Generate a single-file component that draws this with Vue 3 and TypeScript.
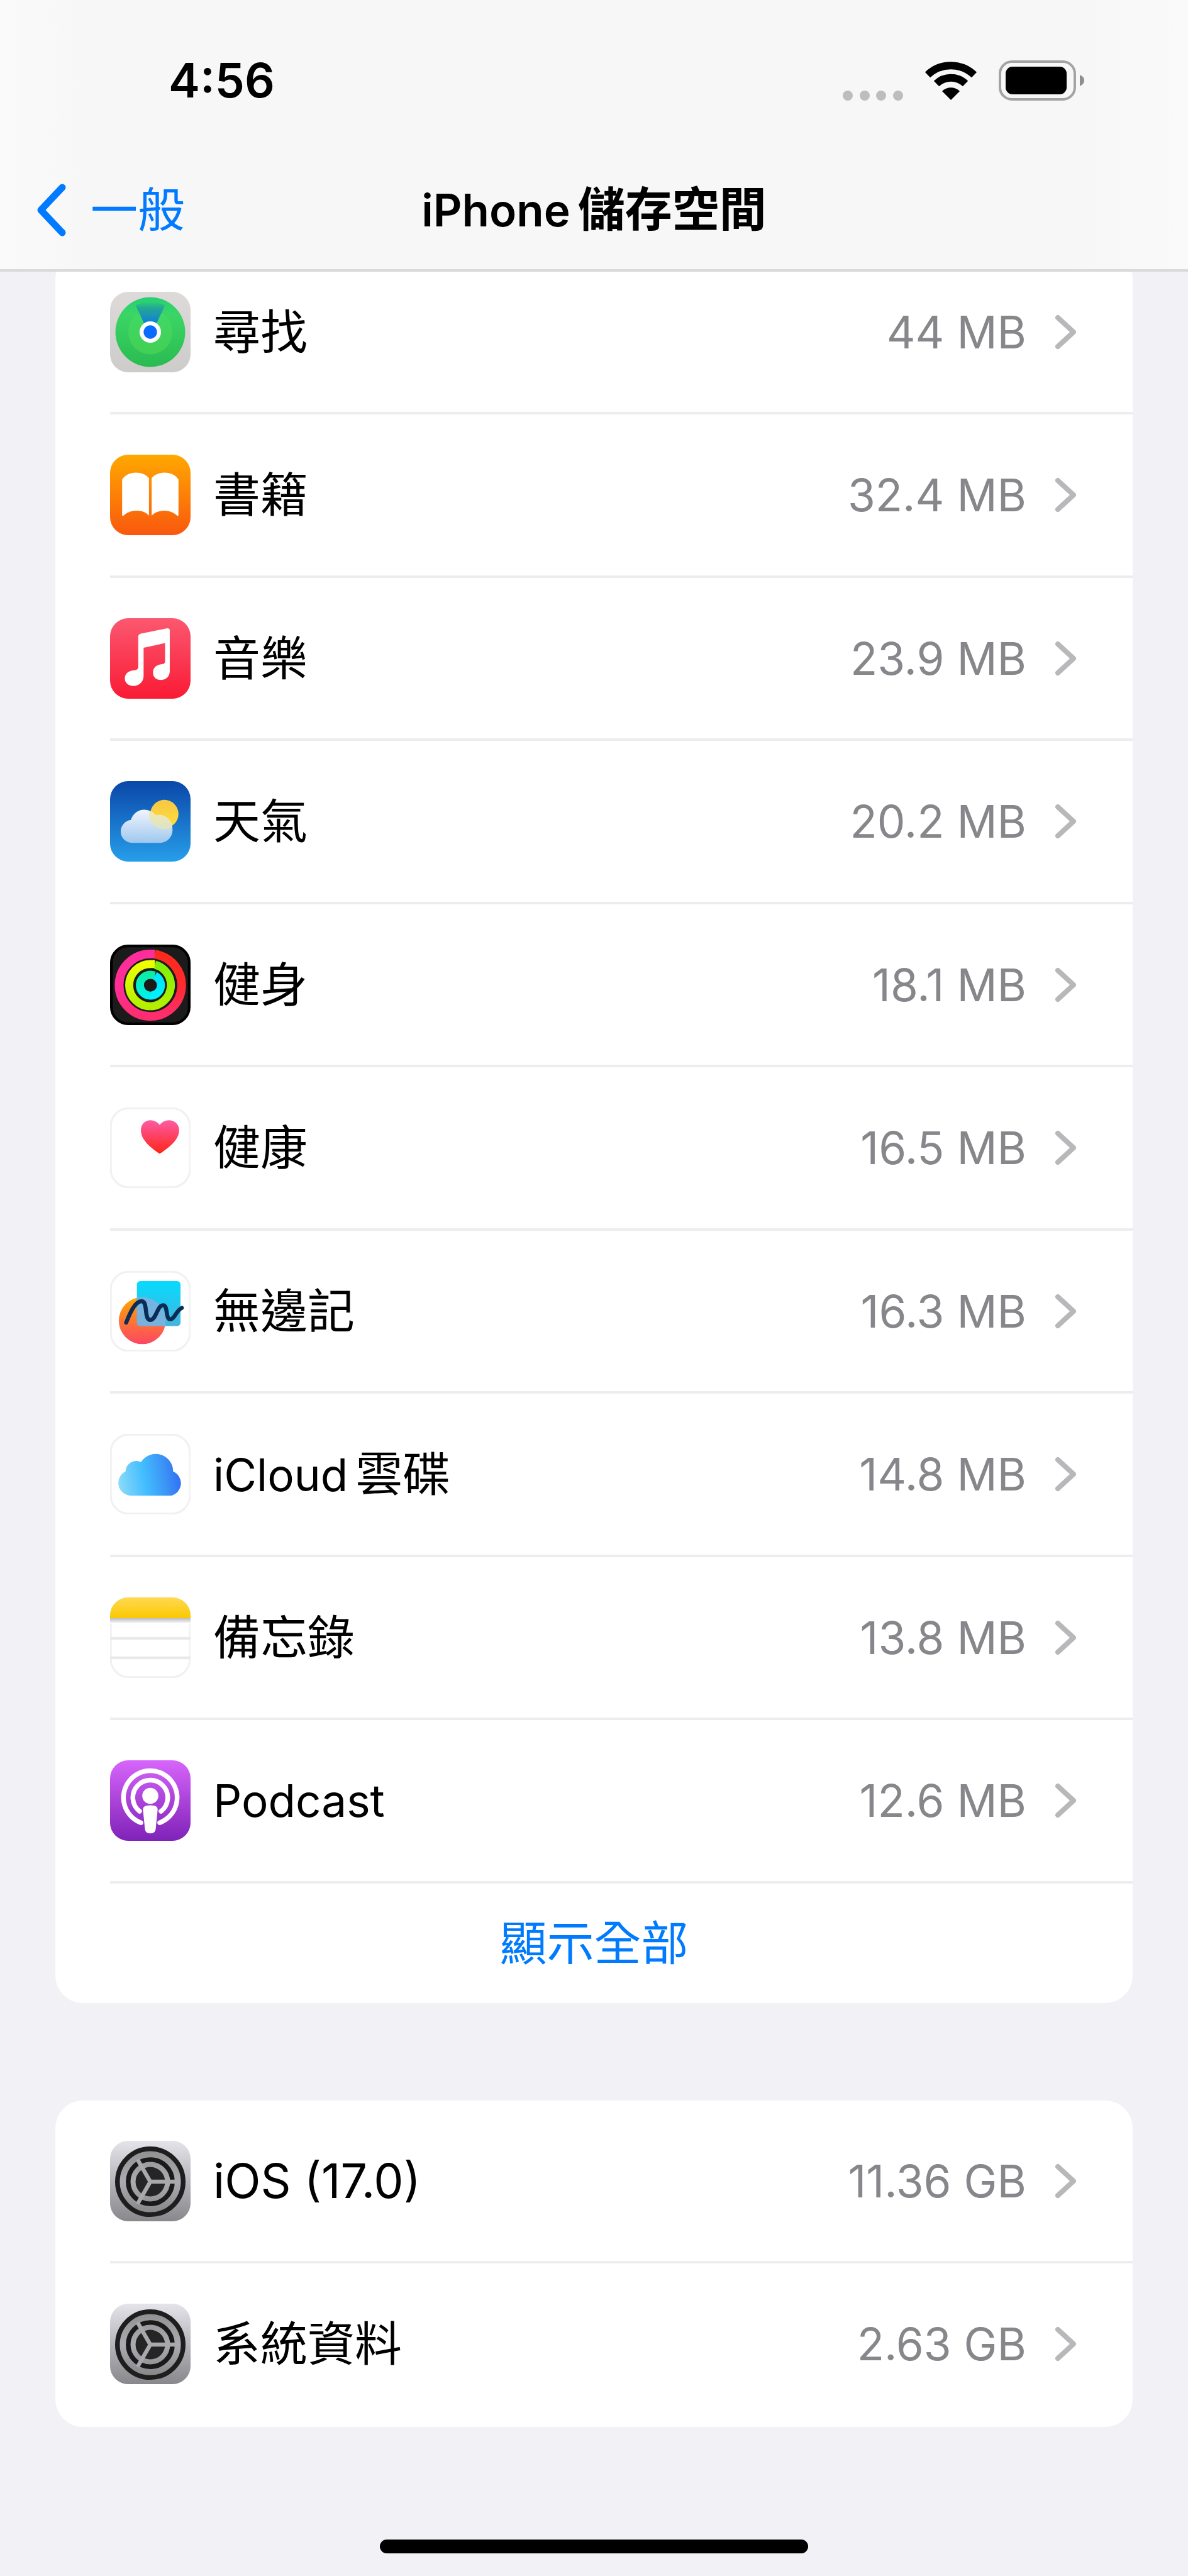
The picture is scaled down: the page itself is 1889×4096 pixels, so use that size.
<script setup lang="ts">
type IconName =
  | 'find' | 'books' | 'music' | 'weather' | 'fitness' | 'health'
  | 'freeform' | 'icloud' | 'notes' | 'podcast' | 'settings'

interface StorageItem {
  icon: IconName
  brand?: string
  name?: string
  size: string
}

const apps: StorageItem[] = [
  { icon: 'find', name: '尋找', size: '44 MB' },
  { icon: 'books', name: '書籍', size: '32.4 MB' },
  { icon: 'music', name: '音樂', size: '23.9 MB' },
  { icon: 'weather', name: '天氣', size: '20.2 MB' },
  { icon: 'fitness', name: '健身', size: '18.1 MB' },
  { icon: 'health', name: '健康', size: '16.5 MB' },
  { icon: 'freeform', name: '無邊記', size: '16.3 MB' },
  { icon: 'icloud', brand: 'iCloud', name: '雲碟', size: '14.8 MB' },
  { icon: 'notes', name: '備忘錄', size: '13.8 MB' },
  { icon: 'podcast', brand: 'Podcast', size: '12.6 MB' },
]

const system: StorageItem[] = [
  { icon: 'settings', name: 'iOS (17.0)', size: '11.36 GB' },
  { icon: 'settings', name: '系統資料', size: '2.63 GB' },
]

const groups = [
  { id: 'apps', items: apps, more: '顯示全部' },
  { id: 'system', items: system, more: '' },
]
</script>

<template>
  <div class="screen">
    <!-- Gradients shared by the app icons -->
    <svg class="defs" aria-hidden="true">
      <defs>
        <linearGradient id="g-find-bg" x1="0" y1="0" x2="0" y2="1"><stop offset="0" stop-color="#dedad9" /><stop offset="1" stop-color="#cdccca" /></linearGradient>
        <linearGradient id="g-find" x1="0" y1="0" x2="0" y2="1"><stop offset="0" stop-color="#27cf74" /><stop offset=".25" stop-color="#3bd565" /><stop offset="1" stop-color="#2abb50" /></linearGradient>
        <linearGradient id="g-find-in" x1="0" y1="0" x2="0" y2="1"><stop offset="0" stop-color="#3fda66" /><stop offset="1" stop-color="#43cf55" /></linearGradient>
        <linearGradient id="g-beam" x1="0" y1="0" x2="0" y2="1"><stop offset="0" stop-color="#27cf74" /><stop offset=".25" stop-color="#24a596" /><stop offset="1" stop-color="#0a74ee" /></linearGradient>
        <linearGradient id="g-books" x1="0" y1="0" x2="0" y2="1"><stop offset="0" stop-color="#ffa800" /><stop offset="1" stop-color="#f9580e" /></linearGradient>
        <linearGradient id="g-music" x1="0" y1="0" x2="0" y2="1"><stop offset="0" stop-color="#fb5870" /><stop offset="1" stop-color="#fa1a34" /></linearGradient>
        <linearGradient id="g-weather" x1="0" y1="0" x2="0" y2="1"><stop offset="0" stop-color="#0a47a8" /><stop offset="1" stop-color="#279eea" /></linearGradient>
        <linearGradient id="g-sun" x1="0" y1="0" x2="0" y2="1"><stop offset="0" stop-color="#f7c744" /><stop offset="1" stop-color="#ffdf3a" /></linearGradient>
        <linearGradient id="g-cloud" gradientUnits="userSpaceOnUse" x1="0" y1="37" x2="0" y2="92"><stop offset="0" stop-color="#fafaff" /><stop offset="1" stop-color="#9fc8ee" /></linearGradient>
        <linearGradient id="g-glow" gradientUnits="userSpaceOnUse" x1="0" y1="45" x2="0" y2="74"><stop offset="0" stop-color="#f3e9b0" /><stop offset="1" stop-color="#d9e2c9" /></linearGradient>
        <linearGradient id="g-r1" gradientUnits="userSpaceOnUse" x1="0" y1="14" x2="0" y2="107"><stop offset="0" stop-color="#ff2a1c" /><stop offset=".5" stop-color="#ff2a2e" /><stop offset="1" stop-color="#ff2d70" /></linearGradient>
        <linearGradient id="g-r2" gradientUnits="userSpaceOnUse" x1="0" y1="14" x2="0" y2="107"><stop offset="0" stop-color="#ff2d9c" /><stop offset=".6" stop-color="#ff2d92" /><stop offset="1" stop-color="#ff2d70" /></linearGradient>
        <linearGradient id="g-r3" gradientUnits="userSpaceOnUse" x1="0" y1="29" x2="0" y2="92"><stop offset="0" stop-color="#7ff00c" /><stop offset="1" stop-color="#b4f000" /></linearGradient>
        <linearGradient id="g-r4" gradientUnits="userSpaceOnUse" x1="0" y1="29" x2="0" y2="92"><stop offset="0" stop-color="#eeff00" /><stop offset="1" stop-color="#b4f000" /></linearGradient>
        <linearGradient id="g-r5" gradientUnits="userSpaceOnUse" x1="0" y1="40" x2="0" y2="80"><stop offset="0" stop-color="#00e4fa" /><stop offset="1" stop-color="#00f2ff" /></linearGradient>
        <linearGradient id="g-r6" gradientUnits="userSpaceOnUse" x1="0" y1="40" x2="0" y2="80"><stop offset="0" stop-color="#0cec9f" /><stop offset="1" stop-color="#00f2f0" /></linearGradient>
        <linearGradient id="g-heart" x1="0" y1="0" x2="0" y2="1"><stop offset="0" stop-color="#fd5ca4" /><stop offset="1" stop-color="#ff2416" /></linearGradient>
        <linearGradient id="g-square" x1="0" y1="0" x2="0" y2="1"><stop offset="0" stop-color="#06dbff" /><stop offset="1" stop-color="#45b4da" /></linearGradient>
        <linearGradient id="g-disc" x1="0" y1="0" x2="0" y2="1"><stop offset="0" stop-color="#ffa800" /><stop offset="1" stop-color="#fd4664" /></linearGradient>
        <linearGradient id="g-icloud" gradientUnits="userSpaceOnUse" x1="11" y1="78" x2="109" y2="62"><stop offset="0" stop-color="#8fdcf8" /><stop offset=".42" stop-color="#42bdff" /><stop offset=".75" stop-color="#3b90f4" /><stop offset="1" stop-color="#2f68f4" /></linearGradient>
        <linearGradient id="g-notes" x1="0" y1="0" x2="0" y2="1"><stop offset="0" stop-color="#ffd952" /><stop offset="1" stop-color="#fbc800" /></linearGradient>
        <linearGradient id="g-shade" x1="0" y1="0" x2="0" y2="1"><stop offset="0" stop-color="#b9b9c2" /><stop offset="1" stop-color="#ffffff" /></linearGradient>
        <linearGradient id="g-podcast" x1="0" y1="0" x2="0" y2="1"><stop offset="0" stop-color="#d765fb" /><stop offset="1" stop-color="#7f22b8" /></linearGradient>
        <linearGradient id="g-settings" x1="0" y1="0" x2="0" y2="1"><stop offset="0" stop-color="#e4e4ea" /><stop offset="1" stop-color="#87878c" /></linearGradient>
        <linearGradient id="g-gear" x1="0" y1="0" x2="0" y2="1"><stop offset="0" stop-color="#8f8f92" /><stop offset=".5" stop-color="#acacb0" /><stop offset="1" stop-color="#858588" /></linearGradient>
        <clipPath id="c-icon"><rect width="120" height="120" rx="27" /></clipPath>
        <clipPath id="c-square"><rect x="40" y="15" width="65" height="67" rx="5" /></clipPath>
        <clipPath id="c-cloud"><path d="M35 92A17 17 0 0 1 31 58A21 21 0 0 1 68 51A20 20 0 0 1 93 71A19 19 0 0 1 76 92Z" /></clipPath>
      </defs>
    </svg>

    <header class="top">
      <div class="status">
        <time class="clock">4:56</time>
        <div class="signals">
          <svg width="96" height="16" viewBox="0 0 96 16" fill="#bdbdbd" role="img" aria-label="行動網路">
            <circle cx="8" cy="8" r="8" /><circle cx="35" cy="8" r="8" /><circle cx="61" cy="8" r="8" /><circle cx="88" cy="8" r="8" />
          </svg>
          <svg width="84" height="64" viewBox="0 0 84 64" role="img" aria-label="Wi-Fi">
            <g fill="none" stroke="#000" stroke-width="12">
              <path d="M5 23A54 54 0 0 1 79 23" />
              <path d="M19 37A33 33 0 0 1 65 37" />
            </g>
            <path d="M42 63L28 49A20 20 0 0 1 56 49Z" />
          </svg>
          <svg width="136" height="64" viewBox="0 0 136 64" role="img" aria-label="電池">
            <rect x="2" y="2" width="119" height="60" rx="19" fill="none" stroke="#a3a3a3" stroke-width="4" />
            <rect x="11" y="10" width="97" height="44" rx="11" />
            <path d="M129 23Q136 26 136 32T129 41Z" fill="#8f8f8f" />
          </svg>
        </div>
      </div>
      <nav class="bar">
        <a class="back" href="#general">
          <svg width="48" height="84" viewBox="0 0 48 84" fill="none" stroke="#007aff" stroke-width="11" stroke-linecap="round" stroke-linejoin="round" aria-hidden="true"><path d="M41 6L7 42L41 78" /></svg>
          <span>一般</span>
        </a>
        <h1><span class="brand">iPhone</span><span>儲存空間</span></h1>
      </nav>
    </header>

    <main class="content">
      <section v-for="group in groups" :key="group.id" class="card">
        <ul>
          <li v-for="item in group.items" :key="item.size">
            <a class="row" :href="'#' + item.icon">
              <svg class="icon" viewBox="0 0 120 120" aria-hidden="true">
                <g v-if="item.icon === 'find'">
                  <rect width="120" height="120" rx="27" fill="url(#g-find-bg)" />
                  <circle cx="60" cy="60" r="52" fill="url(#g-find)" />
                  <circle cx="60" cy="60" r="33" fill="url(#g-find-in)" />
                  <path d="M38 20Q60 10 82 20L66 54H54Z" fill="url(#g-beam)" />
                  <circle cx="60" cy="60" r="16" fill="#fff" />
                  <circle cx="60" cy="60" r="10" fill="#0a6cff" />
                </g>
                <g v-else-if="item.icon === 'books'">
                  <rect width="120" height="120" rx="27" fill="url(#g-books)" />
                  <path d="M18 37C26 23 50 24 58 35V91C50 81 30 81 20 91Q18 92 18 90Z" fill="#fff" />
                  <path d="M102 37C94 23 70 24 62 35V91C70 81 90 81 100 91Q102 92 102 90Z" fill="#fff" />
                </g>
                <g v-else-if="item.icon === 'music'">
                  <rect width="120" height="120" rx="27" fill="url(#g-music)" />
                  <path d="M42 28Q42 24 46 23L85 15Q89 15 89 18V79C89 87 83 92 76 92C68 92 64 87 64 81C64 74 69 70 75 69L80 68Q82 67 82 65V37L50 44V86C50 95 43 101 35 101C27 101 22 96 22 90C22 83 27 79 33 78L39 77Q42 76 42 73Z" fill="#fff" />
                </g>
                <g v-else-if="item.icon === 'weather'">
                  <rect width="120" height="120" rx="27" fill="url(#g-weather)" />
                  <circle cx="81" cy="49" r="21" fill="url(#g-sun)" />
                  <g clip-path="url(#c-cloud)">
                    <rect x="15" y="35" width="82" height="60" fill="url(#g-cloud)" />
                    <circle cx="81" cy="49" r="23" fill="url(#g-glow)" />
                  </g>
                </g>
                <g v-else-if="item.icon === 'fitness'">
                  <rect x="2" y="2" width="116" height="116" rx="25" fill="#1b1b1c" stroke="#000" stroke-width="4" />
                  <g fill="none">
                    <path d="M60 107A46.500 46.500 0 0 1 60 14H67" stroke="url(#g-r2)" stroke-width="13" />
                    <path d="M67 14.500A46.500 46.500 0 0 1 60 107" stroke="url(#g-r1)" stroke-width="13" />
                    <path d="M60 92A31.500 31.500 0 0 1 60 29H67" stroke="url(#g-r4)" stroke-width="12" />
                    <path d="M67 30A31.500 31.500 0 0 1 60 92" stroke="url(#g-r3)" stroke-width="12" />
                    <path d="M60 76A15.500 15.500 0 0 1 60 45L67 46" stroke="url(#g-r6)" stroke-width="12" />
                    <path d="M67 46.500A15.500 15.500 0 0 1 60 76" stroke="url(#g-r5)" stroke-width="12" />
                  </g>
                </g>
                <g v-else-if="item.icon === 'health'">
                  <rect class="plate" x="1" y="1" width="118" height="118" rx="27" />
                  <path d="M74 69C62 61 46 49 46 34C46 24 53 19 60 19C66 19 71 22 74 26C77 22 82 19 88 19C95 19 103 24 103 34C103 49 86 61 74 69Z" fill="url(#g-heart)" />
                </g>
                <g v-else-if="item.icon === 'freeform'">
                  <rect class="plate" x="1" y="1" width="118" height="118" rx="27" />
                  <circle cx="48" cy="74" r="35" fill="url(#g-disc)" />
                  <rect x="40" y="15" width="65" height="67" rx="5" fill="url(#g-square)" />
                  <circle cx="48" cy="74" r="35" fill="#82b0de" fill-opacity=".85" clip-path="url(#c-square)" />
                  <path d="M24 77C28 67 36 45 47 45C57 45 50 73 60 73C69 73 70 51 79 51C87 51 82 72 90 72C96 72 99 58 107 55" fill="none" stroke="#0b2c55" stroke-width="6" stroke-linecap="round" />
                </g>
                <g v-else-if="item.icon === 'icloud'">
                  <rect class="plate" x="1" y="1" width="118" height="118" rx="27" />
                  <path d="M30 92A19 19 0 0 1 23 56A16 16 0 0 1 46 42A26 26 0 0 1 94 56A19 19 0 0 1 91 92Z" fill="url(#g-icloud)" />
                </g>
                <g v-else-if="item.icon === 'notes'">
                  <rect class="plate" x="1" y="1" width="118" height="118" rx="27" />
                  <g clip-path="url(#c-icon)">
                    <rect width="120" height="31" fill="url(#g-notes)" />
                    <rect y="31" width="120" height="8" fill="url(#g-shade)" />
                    <rect y="59" width="120" height="4" fill="#e9e9ea" />
                    <rect y="88" width="120" height="4" fill="#e9e9ea" />
                  </g>
                </g>
                <g v-else-if="item.icon === 'podcast'">
                  <rect width="120" height="120" rx="27" fill="url(#g-podcast)" />
                  <g fill="none" stroke="#fff" stroke-width="7" stroke-linecap="round">
                    <path d="M46 93A40 40 0 1 1 74 93" />
                    <path d="M44 76A26 26 0 1 1 76 76" />
                  </g>
                  <circle cx="60" cy="53" r="12" fill="#fff" />
                  <path d="M49 73Q49 67 60 67T71 73L68 103Q67 109 60 109T52 103Z" fill="#fff" />
                </g>
                <g v-else>
                  <rect width="120" height="120" rx="27" fill="url(#g-settings)" />
                  <circle cx="60" cy="61" r="49" fill="url(#g-gear)" stroke="#1e1e1f" stroke-width="7" />
                  <circle cx="60" cy="61" r="33" fill="none" stroke="#1a1a1b" stroke-width="7" />
                  <circle cx="60" cy="61" r="22" fill="#252526" />
                  <path d="M60 61H98M60 61L41 28M60 61L41 94" stroke="#a9a9ad" stroke-width="6" />
                </g>
              </svg>
              <span class="name"><span v-if="item.brand" class="brand">{{ item.brand }}</span><span v-if="item.name">{{ item.name }}</span></span>
              <span class="size">{{ item.size }}</span>
              <svg class="chevron" width="35" height="56" viewBox="0 0 35 56" fill="none" stroke="#b8b8bb" stroke-width="8" stroke-linecap="round" stroke-linejoin="round" aria-hidden="true"><path d="M5 5L30 28L5 51" /></svg>
            </a>
          </li>
        </ul>
        <button v-if="group.more" class="more" type="button">{{ group.more }}</button>
      </section>
    </main>

    <footer class="home"><span class="indicator"></span></footer>
  </div>
</template>

<style>
body {
  margin: 0;
  background: #f2f1f6;
}
</style>

<style scoped>
.screen {
  display: flex;
  flex-direction: column;
  min-height: 100vh;
  color: #000;
  font-family: Inter, "Noto Sans CJK TC", sans-serif;
  font-size: 75px;
  line-height: 100px;
}
.defs {
  position: absolute;
  width: 0;
  height: 0;
}
.top {
  position: relative;
  z-index: 1;
  box-sizing: border-box;
  height: 432px;
  background: linear-gradient(90deg, #fafafa, #f7f7f7 8%, #f7f7f7 90%, #fafafa);
  border-bottom: 4px solid #dadadc;
}
.status {
  display: flex;
  align-items: center;
  justify-content: space-between;
  height: 100px;
  padding: 78px 165px 0 268px;
}
.clock {
  font-weight: 600;
}
.signals {
  display: flex;
  align-items: flex-end;
  gap: 34px;
}
.bar {
  display: grid;
  grid-template-columns: 1fr auto 1fr;
  align-items: center;
  height: 100px;
  margin-top: 105px;
  padding: 0 58px;
}
.back {
  display: flex;
  align-items: center;
  gap: 38px;
  color: #007aff;
  text-decoration: none;
}
h1 {
  display: flex;
  align-items: baseline;
  gap: 12px;
  margin: 0;
  font-size: 75px;
  font-weight: 600;
}
.content {
  display: flex;
  flex: 1;
  flex-direction: column;
  gap: 155px;
  margin: -32px 88px 0;
}
.card {
  overflow: hidden;
  background: #fff;
  border-radius: 44px;
}
ul {
  margin: 0;
  padding: 0;
  list-style: none;
}
.row {
  display: flex;
  box-sizing: border-box;
  align-items: center;
  height: 259px;
  margin-left: 87px;
  padding-right: 89px;
  border-bottom: 4px solid #ededee;
  color: inherit;
  text-decoration: none;
}
li:nth-child(even) .row {
  height: 260px;
}
.card:last-child li:last-child .row {
  border-bottom-color: transparent;
}
.icon {
  width: 128px;
  height: 128px;
  margin-right: 36px;
}
.plate {
  fill: #fff;
  stroke: #f1f1f1;
  stroke-width: 3;
}
.name {
  display: flex;
  flex: 1;
  align-items: baseline;
  gap: 12px;
}
.brand,
.size {
  font-size: 71px;
}
.size {
  color: #87878b;
}
.chevron {
  margin-left: 45px;
}
.more {
  display: block;
  width: 100%;
  height: 190px;
  padding: 0;
  background: none;
  border: 0;
  color: #007aff;
  font: inherit;
}
.home {
  display: flex;
  justify-content: center;
  padding-bottom: 36px;
}
.indicator {
  width: 36%;
  height: 22px;
  background: #000;
  border-radius: 11px;
}
</style>
